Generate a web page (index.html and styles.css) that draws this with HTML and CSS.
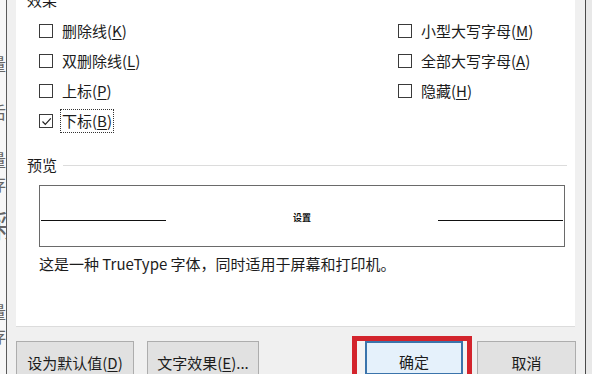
FILE: index.html
```html
<!DOCTYPE html>
<html lang="zh-CN">
<head>
    <meta charset="UTF-8">
    <title>字体</title>
    <link rel="stylesheet" href="styles.css">
</head>
<body>
    <div class="screen">
        <div class="doc-edge">
            <div class="doc-text">
                <div></div>
                <div>量</div>
                <div></div>
                <div>后</div>
                <div></div>
                <div>量</div>
                <div>存</div>
                <div class="big">彩</div>
                <div></div>
                <div></div>
                <div>量</div>
                <div>存</div>
                <div>，</div>
                <div>后</div>
            </div>
        </div>

        <div class="dialog">
            <div class="panel">
                <div class="group-title">效果</div>

                <div class="effects">
                    <label class="check-row">
                        <span class="box"></span>
                        <span>删除线(<u>K</u>)</span>
                    </label>
                    <label class="check-row">
                        <span class="box"></span>
                        <span>小型大写字母(<u>M</u>)</span>
                    </label>
                    <label class="check-row">
                        <span class="box"></span>
                        <span>双删除线(<u>L</u>)</span>
                    </label>
                    <label class="check-row">
                        <span class="box"></span>
                        <span>全部大写字母(<u>A</u>)</span>
                    </label>
                    <label class="check-row">
                        <span class="box"></span>
                        <span>上标(<u>P</u>)</span>
                    </label>
                    <label class="check-row">
                        <span class="box"></span>
                        <span>隐藏(<u>H</u>)</span>
                    </label>
                    <label class="check-row">
                        <span class="box">
                            <svg width="11" height="11" viewBox="0 0 11 11">
                                <path d="M1.5 5.5 L4.3 8.3 L9.8 2.4" fill="none" stroke="#222" stroke-width="1.2"/>
                            </svg>
                        </span>
                        <span class="focused">下标(<u>B</u>)</span>
                    </label>
                </div>

                <div class="preview-head">
                    <span>预览</span>
                    <span class="rule"></span>
                </div>

                <div class="preview-box">
                    <span class="pline left"></span>
                    <span class="sample">设置</span>
                    <span class="pline right"></span>
                </div>

                <p class="note">这是一种 TrueType 字体，同时适用于屏幕和打印机。</p>
            </div>

            <div class="buttons">
                <button class="btn btn-default">设为默认值(<u>D</u>)</button>
                <button class="btn btn-effects">文字效果(<u>E</u>)...</button>
                <div class="mark">
                    <button class="btn btn-ok">确定</button>
                </div>
                <button class="btn btn-cancel">取消</button>
            </div>
        </div>

        <div class="frame-right"></div>
    </div>
</body>
</html>
```

FILE: styles.css
```css
* {
    box-sizing: border-box;
    margin: 0;
    padding: 0;
}

body {
    font-family: "Noto Sans CJK SC", "Noto Sans", sans-serif;
    font-size: 15px;
    color: #1c1c1c;
    background: #f0f0f0;
    overflow: hidden;
}

.screen {
    display: flex;
    width: 592px;
    height: 374px;
    overflow: hidden;
}

/* document behind the dialog */
.doc-edge {
    width: 7px;
    flex-shrink: 0;
    background: #f7f7f7;
    border-right: 1px solid #5a5a5a;
    overflow: hidden;
}

.doc-text {
    margin-left: -11px;
    padding-top: 28px;
    font-size: 17px;
    line-height: 24px;
    color: #666;
}

.doc-text div {
    height: 24px;
}

.doc-text .big {
    height: 56px;
    font-size: 30px;
    line-height: 56px;
}

.dialog {
    width: 578px;
    flex-shrink: 0;
    background: #f0f0f0;
    padding-left: 9px;
}

.panel {
    width: 559px;
    height: 334px;
    background: #fff;
    border-bottom: 1px solid #dcdcdc;
    padding-left: 11px;
    padding-right: 8px;
}

.group-title {
    line-height: 14px;
    height: 14px;
    margin-top: -7px;
}

.effects {
    display: grid;
    grid-template-columns: 359px 1fr;
    grid-auto-rows: 30px;
    margin-top: 9px;
    padding-left: 12px;
}

.check-row {
    display: flex;
    align-items: center;
    gap: 9px;
    line-height: 20px;
}

.box {
    width: 14px;
    height: 14px;
    border: 1px solid #3a3a3a;
    background: #fff;
    display: flex;
    align-items: center;
    justify-content: center;
}

.focused {
    outline: 1px dotted #333;
    outline-offset: 1px;
}

u {
    text-decoration-thickness: 1px;
    text-underline-offset: 2px;
}

.preview-head {
    display: flex;
    align-items: center;
    margin-top: 19px;
    line-height: 20px;
}

.rule {
    flex: 1;
    height: 1px;
    background: #dcdcdc;
    margin-left: 6px;
}

.preview-box {
    display: flex;
    justify-content: space-between;
    align-items: flex-start;
    width: 526px;
    height: 62px;
    margin: 10px 0 0 12px;
    border: 1px solid #6a6a6a;
}

.pline {
    width: 125px;
    height: 1px;
    background: #111;
    margin-top: 34px;
}

.pline.left {
    margin-left: 1px;
}

.pline.right {
    margin-right: 1px;
}

.sample {
    font-size: 9px;
    font-weight: 700;
    line-height: 10px;
    margin-top: 27px;
    color: #111;
}

.note {
    margin: 7px 0 0 12px;
    line-height: 20px;
}

.buttons {
    display: flex;
    align-items: flex-start;
    margin-top: 9px;
}

.btn {
    font-family: inherit;
    font-size: 15px;
    color: #1c1c1c;
    height: 34px;
    line-height: 20px;
    padding-top: 9px;
    background: #e1e1e1;
    border: 1px solid #adadad;
    text-align: center;
    display: block;
    align-self: flex-start;
}

.btn-default {
    width: 118px;
    margin-top: 5px;
}

.btn-effects {
    width: 112px;
    margin: 5px 0 0 13px;
}

.mark {
    margin-left: 93px;
    border: 5px solid #d3242c;
    border-bottom: none;
    padding: 0 4px 0 8px;
    height: 40px;
    background: #f4f4f4;
}

.btn-ok {
    width: 98px;
    border: 2px solid #3b74ab;
    background: #e5f1fb;
    padding-top: 8px;
}

.btn-cancel {
    width: 99px;
    margin: 5px 0 0 5px;
}

.frame-right {
    flex: 1;
    background: #e8e8e8;
    border-left: 1px solid #4a4a4a;
}
```
